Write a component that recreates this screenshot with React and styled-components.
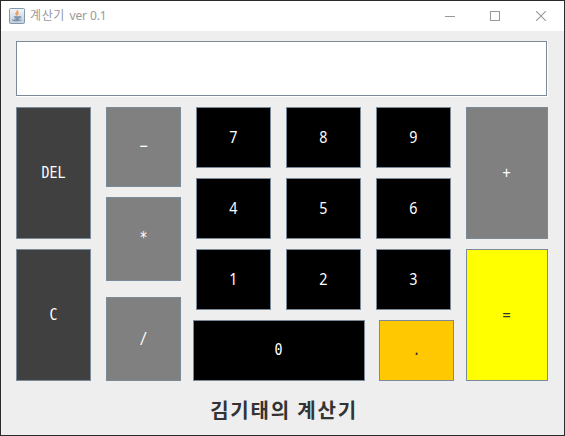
import React from "react";
import styled, { createGlobalStyle } from "styled-components";

const GlobalStyle = createGlobalStyle`
  *, *::before, *::after { box-sizing: border-box; }
  body { margin: 0; background: #eee; }
`;

const Window = styled.main`
  width: 565px;
  height: 436px;
  border: 1px solid #2b292b;
  background: #eeeeee;
  overflow: hidden;
`;

const TitleBar = styled.header`
  display: flex;
  align-items: center;
  height: 30px;
  padding-left: 8px;
  background: #fff;
`;

const Title = styled.h1`
  flex: 1;
  margin: 0 0 0 5px;
  color: #999;
  font: 400 12px/28px "Noto Sans", "Noto Sans CJK KR", sans-serif;
  letter-spacing: 0.6px;
  word-spacing: 0.8px;
  white-space: nowrap;
`;

const Version = styled.span`
  letter-spacing: -0.1px;
  word-spacing: 0;
`;

const CaptionButton = styled.button`
  display: grid;
  place-items: center;
  width: ${(p) => p.$w || 46}px;
  height: 30px;
  padding: 0;
  border: 0;
  background: transparent;
`;

const Content = styled.section`
  padding: 10px 15px 0;
`;

const Display = styled.div`
  width: 532px;
  height: 56px;
  border: solid #fff;
  border-width: 0 1px 1px 0;
  background: #fff;
  box-shadow: inset 0 0 0 1px #7a8a99;
`;

const Keypad = styled.div`
  display: flex;
  margin-top: 10px;
  height: 274px;
`;

const Column = styled.div`
  display: flex;
  flex-direction: column;
  gap: 10px;
  margin-left: ${(p) => p.$before || 0}px;
`;

const DigitGrid = styled.div`
  display: grid;
  grid-template-columns: repeat(3, 75px);
  gap: 10px 15px;
  padding-left: 3px;
`;

const BottomRow = styled.div`
  display: flex;
  gap: 14px;
`;

const Key = styled.button`
  display: flex;
  align-items: center;
  justify-content: center;
  flex: none;
  width: ${(p) => p.$w || 75}px;
  height: ${(p) => p.$h || 61}px;
  margin: ${(p) => p.$top || 0}px 0 0;
  padding: 0 0 ${(p) => p.$lift || 0}px;
  border: 1px solid #7a8a99;
  background: ${(p) => p.$bg || "#000"};
  color: ${(p) => p.$fg || "#fff"};
  font: 400 15px/18px "DejaVu Sans Mono", monospace;
`;

const KeyLabel = styled.span`
  transform: scaleX(0.886);
`;

const DigitLabel = styled.span`
  padding-right: 1px;
  font: 400 15.4px/18px "Noto Sans", sans-serif;
  transform: scaleX(0.93);
`;

const Footer = styled.footer`
  margin-top: 15px;
  padding-left: 3px;
  color: #333;
  font: 700 20px/28px "Noto Sans CJK KR", sans-serif;
  letter-spacing: 1.8px;
  text-align: center;
`;

const JavaIcon = () => (
  <svg width="16" height="16" viewBox="0 0 16 16" aria-hidden="true">
    <defs>
      <linearGradient id="tile" x2="0" y2="1">
        <stop stopColor="#f4f6f8" />
        <stop offset="1" stopColor="#bfcddb" />
      </linearGradient>
    </defs>
    <rect x=".5" y=".5" width="15" height="15" rx="1" fill="url(#tile)" stroke="#8198ad" />
    <path d="M8.4 2.2c1 1.6-2.6 2.4-1.3 4.2l.8 1M9.8 4.4c-1.6.8-1.8 1.5-1 2.7" fill="none" stroke="#e79a50" strokeWidth="1.3" />
    <path d="M4.7 8.3h5.8v1.8c0 1.1-4.6 1.1-4.6 0z" fill="#7890a6" />
    <path d="M10.4 8.4c2.4-.3 1.7 1.7-.3 2M3.4 11.5c-.8 1.6 8.2 1.5 9 .2M5.3 11.1c1.4.5 3.4.5 4.7 0" fill="none" stroke="#657f99" />
  </svg>
);

const digits = ["7", "8", "9", "4", "5", "6", "1", "2", "3"];

const CalcKey = ({ label, digit, ...rest }) => (
  <Key type="button" {...rest}>
    {digit ? <DigitLabel>{label}</DigitLabel> : <KeyLabel>{label}</KeyLabel>}
  </Key>
);

export default function App() {
  return (
    <>
      <GlobalStyle />
      <Window>
        <TitleBar>
          <JavaIcon />
          <Title>계산기 <Version>ver 0.1</Version></Title>
          <CaptionButton $w={44} aria-label="Minimize">
            <svg width="10" height="10" shapeRendering="crispEdges"><path d="M0 5.5h10" stroke="#999" /></svg>
          </CaptionButton>
          <CaptionButton aria-label="Maximize">
            <svg width="10" height="10" shapeRendering="crispEdges"><path d="M.5.5h9v9h-9z" fill="none" stroke="#999" /></svg>
          </CaptionButton>
          <CaptionButton aria-label="Close">
            <svg width="10" height="10"><path d="M0 0l10 10M10 0L0 10" stroke="#999" strokeWidth="1.1" /></svg>
          </CaptionButton>
        </TitleBar>
        <Content>
          <Display />
          <Keypad>
            <Column>
              <CalcKey label="DEL" $h={132} $bg="#404040" />
              <CalcKey label="C" $h={132} $bg="#404040" />
            </Column>
            <Column $before={15}>
              <CalcKey label="−" $h={80} $lift={2} $bg="#808080" />
              <CalcKey label="*" $h={84} $lift={2} $bg="#808080" />
              <CalcKey label="/" $h={84} $bg="#808080" $top={6} />
            </Column>
            <Column $before={12}>
              <DigitGrid>
                {digits.map((d) => <CalcKey key={d} label={d} digit />)}
              </DigitGrid>
              <BottomRow>
                <CalcKey label="0" $w={172} $lift={2} />
                <CalcKey label="." $lift={2} $bg="#ffc800" $fg="#333" />
              </BottomRow>
            </Column>
            <Column $before={12}>
              <CalcKey label="+" $w={82} $h={132} $bg="#808080" />
              <CalcKey label="=" $w={82} $h={132} $bg="#ffff00" $fg="#333" />
            </Column>
          </Keypad>
          <Footer>김기태의 계산기</Footer>
        </Content>
      </Window>
    </>
  );
}
